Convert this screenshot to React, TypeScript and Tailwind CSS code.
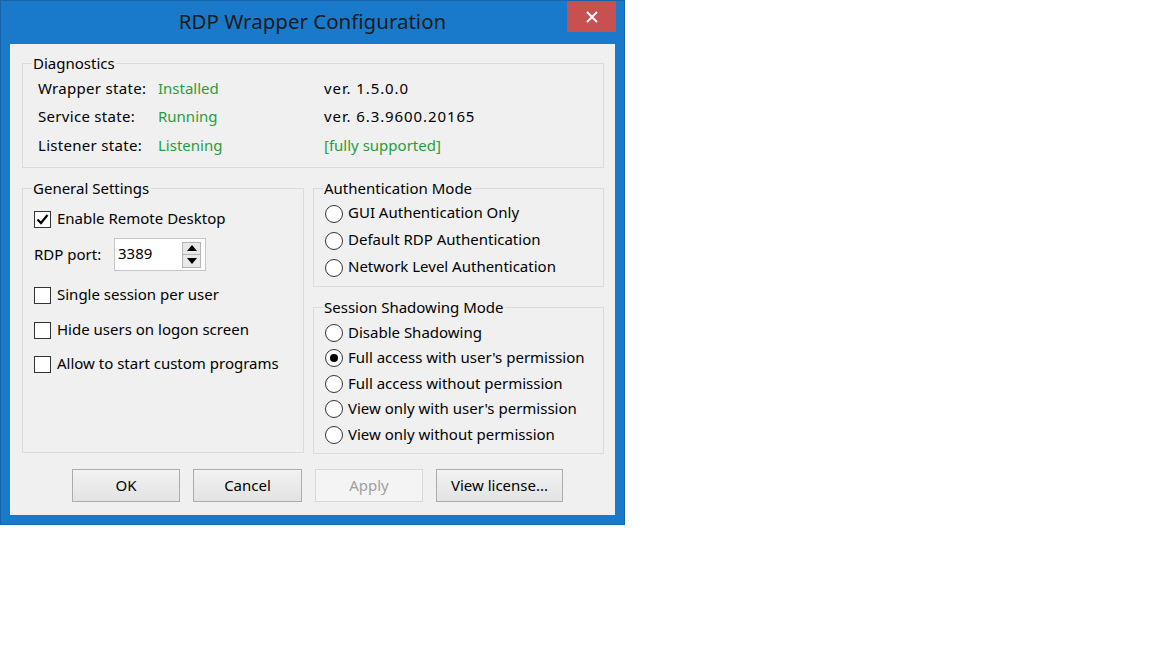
import type { ReactNode } from 'react';

function Group({ title, className, children }: { title: string; className: string; children: ReactNode }) {
  return (
    <div className={`border border-[#dcdcdc] ${className}`}>
      <div className="-mt-[10px] ml-[9px] w-fit px-[1px] bg-[#f0f0f0] leading-[19px]">{title}</div>
      {children}
    </div>
  );
}

function CheckBox({ label, checked, className }: { label: string; checked?: boolean; className: string }) {
  return (
    <div className={`flex items-center h-[24px] ${className}`}>
      <div className="w-[17px] h-[17px] border border-[#333333] bg-white flex items-center justify-center mr-[6px]">
        {checked && (
          <svg width="13" height="13" viewBox="0 0 13 13">
            <path d="M1.5 6.5 L5 10 L11.5 2" fill="none" stroke="#000" strokeWidth="2.2" />
          </svg>
        )}
      </div>
      <span className="-mt-[2px]">{label}</span>
    </div>
  );
}

function Radio({ label, checked, className }: { label: string; checked?: boolean; className: string }) {
  return (
    <div className={`flex items-center ${className}`}>
      <div className="w-[18px] h-[18px] rounded-full border border-[#333333] bg-white flex items-center justify-center mr-[5px]">
        {checked && <div className="w-[8px] h-[8px] rounded-full bg-black" />}
      </div>
      <span className="-mt-[2px]">{label}</span>
    </div>
  );
}

function Button({ label, width, disabled }: { label: string; width: string; disabled?: boolean }) {
  return (
    <div
      className={`${width} h-[33px] flex items-center justify-center border ${
        disabled
          ? 'border-[#d9d9d9] bg-[#f4f4f4] text-[#a0a0a0]'
          : 'border-[#acacac] bg-gradient-to-b from-[#f2f2f2] to-[#e3e3e3] text-black'
      }`}
    >
      {label}
    </div>
  );
}

export default function App() {
  return (
    <div className="w-[1152px] h-[648px] bg-white font-['Noto_Sans',sans-serif] text-[15px] text-black">
      <div className="relative w-[625px] h-[525px] border border-[#1565a8] bg-[#1979ca] flex flex-col px-[9px] pb-[9px]">
        <div className="h-[43px] flex items-center justify-center text-[20.5px] text-[#1b1b1b] pb-[2px]">
          RDP Wrapper Configuration
        </div>
        <div className="absolute top-0 right-[8px] w-[49px] h-[31px] bg-[#c75050] flex items-center justify-center">
          <svg width="12" height="12" viewBox="0 0 12 12">
            <path d="M1 1 L11 11 M11 1 L1 11" stroke="#fff" strokeWidth="2" />
          </svg>
        </div>

        <div className="flex-1 bg-[#f0f0f0] flex flex-col pl-[12px] pt-[19px]">
          <Group title="Diagnostics" className="w-[582px] h-[105px]">
            <div className="mt-[1px] pl-[15px] grid grid-cols-[120px_166px_1fr]">
              <div className="h-[28px] flex items-center tracking-[0.3px]">Wrapper state:</div>
              <div className="h-[28px] flex items-center text-[#2a9d3c]">Installed</div>
              <div className="h-[28px] flex items-center tracking-[0.9px]">ver. 1.5.0.0</div>
              <div className="h-[29px] flex items-center tracking-[0.3px]">Service state:</div>
              <div className="h-[29px] flex items-center text-[#2a9d3c]">Running</div>
              <div className="h-[29px] flex items-center tracking-[0.9px]">ver. 6.3.9600.20165</div>
              <div className="h-[29px] flex items-center tracking-[0.3px]">Listener state:</div>
              <div className="h-[29px] flex items-center text-[#2a9d3c]">Listening</div>
              <div className="h-[29px] flex items-center text-[#2a9d3c]">[fully supported]</div>
            </div>
          </Group>

          <div className="flex gap-[9px] mt-[20px]">
            <Group title="General Settings" className="w-[282px] h-[265px]">
              <div className="pl-[11px] flex flex-col">
                <CheckBox label="Enable Remote Desktop" checked className="mt-[9px]" />
                <div className="flex items-center mt-[7px] h-[33px]">
                  <span className="w-[80px]">RDP port:</span>
                  <div className="w-[92px] h-[33px] border border-[#c5c5c5] bg-white flex items-center pl-[3px] pr-[4px]">
                    <span className="flex-1 -mt-[2px]">3389</span>
                    <div className="flex flex-col">
                      <div className="w-[19px] h-[13px] border border-[#b5b5b5] bg-[#e8e8e8] flex items-center justify-center">
                        <svg width="10" height="6" viewBox="0 0 10 6">
                          <path d="M0 6 L5 0 L10 6 Z" fill="#000" />
                        </svg>
                      </div>
                      <div className="w-[19px] h-[13px] border border-t-0 border-[#b5b5b5] bg-[#e8e8e8] flex items-center justify-center">
                        <svg width="10" height="6" viewBox="0 0 10 6">
                          <path d="M0 0 L10 0 L5 6 Z" fill="#000" />
                        </svg>
                      </div>
                    </div>
                  </div>
                </div>
                <CheckBox label="Single session per user" className="mt-[12px]" />
                <CheckBox label="Hide users on logon screen" className="mt-[11px]" />
                <CheckBox label="Allow to start custom programs" className="mt-[10px]" />
              </div>
            </Group>

            <div className="flex flex-col">
              <Group title="Authentication Mode" className="w-[291px] h-[99px]">
                <div className="pl-[11px] mt-[2px] flex flex-col">
                  <Radio label="GUI Authentication Only" className="h-[27px]" />
                  <Radio label="Default RDP Authentication" className="h-[27px]" />
                  <Radio label="Network Level Authentication" className="h-[27px]" />
                </div>
              </Group>
              <Group title="Session Shadowing Mode" className="w-[291px] h-[147px] mt-[20px]">
                <div className="pl-[11px] mt-[3px] flex flex-col">
                  <Radio label="Disable Shadowing" className="h-[25.5px]" />
                  <Radio label="Full access with user's permission" checked className="h-[25.5px]" />
                  <Radio label="Full access without permission" className="h-[25.5px]" />
                  <Radio label="View only with user's permission" className="h-[25.5px]" />
                  <Radio label="View only without permission" className="h-[25.5px]" />
                </div>
              </Group>
            </div>
          </div>

          <div className="flex gap-[13px] mt-[15px] pl-[50px]">
            <Button label="OK" width="w-[108px]" />
            <Button label="Cancel" width="w-[109px]" />
            <Button label="Apply" width="w-[108px]" disabled />
            <Button label="View license..." width="w-[127px]" />
          </div>
        </div>
      </div>
    </div>
  );
}
